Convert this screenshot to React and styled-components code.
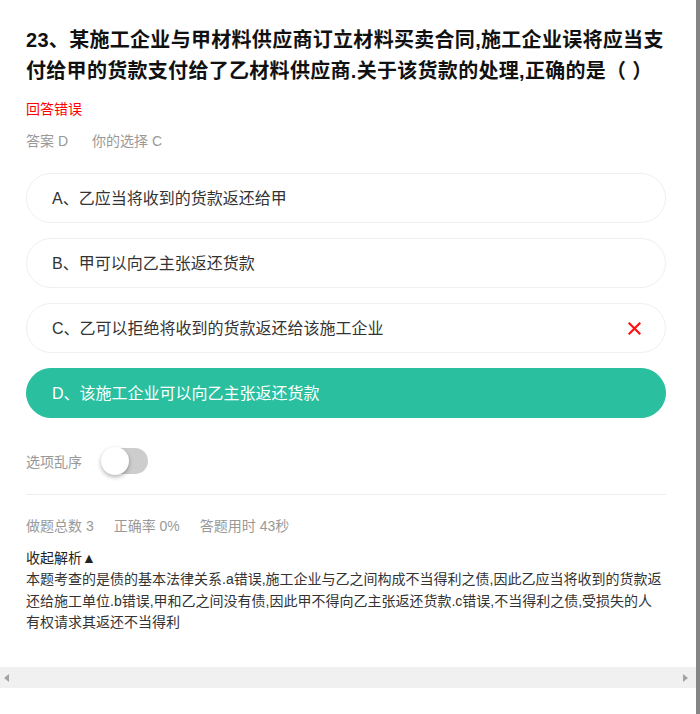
import React from 'react';
import styled, {createGlobalStyle} from "styled-components";

const GlobalStyle = createGlobalStyle`
    html, body {
        margin: 0;
        padding: 0;
        background: #fff;
    }
    body {
        font-family: "Liberation Sans", "Noto Sans CJK SC", sans-serif;
        color: #333;
    }
`;

const options = [
    {key: 'A', text: '乙应当将收到的货款返还给甲'},
    {key: 'B', text: '甲可以向乙主张返还货款'},
    {key: 'C', text: '乙可以拒绝将收到的货款返还给该施工企业', wrong: true},
    {key: 'D', text: '该施工企业可以向乙主张返还货款', correct: true},
];

const CrossIcon = () => (
    <svg width="13" height="13" viewBox="0 0 13 13">
        <path d="M1.5 1.5 L11.5 11.5 M11.5 1.5 L1.5 11.5" stroke="#ff1010" strokeWidth="2.2" strokeLinecap="square" />
    </svg>
);

const App = () => {

    return (
        <Page>
            <GlobalStyle />
            <Main>
                <Content>
                    <Title>23、某施工企业与甲材料供应商订立材料买卖合同,施工企业误将应当支付给甲的货款支付给了乙材料供应商.关于该货款的处理,正确的是（ ）</Title>
                    <Verdict>回答错误</Verdict>
                    <AnswerRow>
                        <span>答案 D</span>
                        <span>你的选择 C</span>
                    </AnswerRow>
                    <OptionList>
                        {options.map(o => (
                            <Option key={o.key} $correct={o.correct}>
                                <OptionText>{o.key}、{o.text}</OptionText>
                                {o.wrong && <CrossIcon />}
                            </Option>
                        ))}
                    </OptionList>
                    <ShuffleRow>
                        <span>选项乱序</span>
                        <Switch>
                            <Knob />
                        </Switch>
                    </ShuffleRow>
                    <Divider />
                    <Stats>
                        <span>做题总数 3</span>
                        <span>正确率 0%</span>
                        <span>答题用时 43秒</span>
                    </Stats>
                    <Collapse>收起解析▲</Collapse>
                    <Analysis>
                        本题考查的是债的基本法律关系.a错误,施工企业与乙之间构成不当得利之债,因此乙应当将收到的货款返还给施工单位.b错误,甲和乙之间没有债,因此甲不得向乙主张返还货款.c错误,不当得利之债,受损失的人有权请求其返还不当得利
                    </Analysis>
                </Content>
                <ScrollBar>
                    <Arrow $dir="left" />
                    <Arrow $dir="right" />
                </ScrollBar>
                <Filler />
            </Main>
            <EdgeStrip />
        </Page>
    );
};

export default App;

const Page = styled.div`
    display: flex;
    width: 700px;
    height: 714px;
    overflow: hidden;
`;

const Main = styled.div`
    width: 696px;
    display: flex;
    flex-direction: column;
    background: #fff;
`;

const Content = styled.div`
    height: 667px;
    overflow: hidden;
    box-sizing: border-box;
    padding: 25px 30px 0 26px;
    display: flex;
    flex-direction: column;
`;

const Title = styled.h1`
    margin: 0;
    width: 650px;
    font-size: 20px;
    line-height: 31px;
    font-weight: 700;
    letter-spacing: 0.3px;
    color: #111;
`;

const Verdict = styled.div`
    margin-top: 12px;
    font-size: 14px;
    line-height: 20px;
    color: #f00;
`;

const AnswerRow = styled.div`
    margin-top: 12px;
    display: flex;
    gap: 24px;
    font-size: 14px;
    line-height: 20px;
    color: #999;
`;

const OptionList = styled.div`
    margin-top: 22px;
    display: flex;
    flex-direction: column;
    gap: 15px;
`;

const Option = styled.div`
    height: 50px;
    box-sizing: border-box;
    border-radius: 25px;
    border: 1px solid ${p => p.$correct ? '#29bf9f' : '#efefef'};
    background: ${p => p.$correct ? '#29bf9f' : '#fff'};
    color: ${p => p.$correct ? '#fff' : '#333'};
    display: flex;
    align-items: center;
    justify-content: space-between;
    padding: 0 24px 0 25px;
    font-size: 16px;
`;

const OptionText = styled.span`
    margin-bottom: 3px;
`;

const ShuffleRow = styled.div`
    margin-top: 29px;
    display: flex;
    align-items: center;
    gap: 19px;
    font-size: 14px;
    color: #999;
`;

const Switch = styled.div`
    position: relative;
    width: 46px;
    height: 26px;
    border-radius: 13px;
    background: #cdcdcd;
    margin: 1px 0 1px 1px;
`;

const Knob = styled.div`
    position: absolute;
    left: -1px;
    top: -1px;
    width: 28px;
    height: 28px;
    border-radius: 50%;
    background: #fff;
    box-shadow: 0 2px 4px rgba(0, 0, 0, 0.3);
`;

const Divider = styled.div`
    margin-top: 19px;
    height: 1px;
    background: #eee;
    width: 640px;
`;

const Stats = styled.div`
    margin-top: 21px;
    display: flex;
    gap: 20px;
    font-size: 14px;
    line-height: 20px;
    color: #999;
`;

const Collapse = styled.div`
    margin-top: 12px;
    font-size: 14px;
    line-height: 20px;
    color: #222;
`;

const Analysis = styled.p`
    margin: 1px 0 0;
    width: 638px;
    font-size: 14px;
    line-height: 21.5px;
    color: #333;
`;

const ScrollBar = styled.div`
    height: 21px;
    background: #f0f0f0;
    display: flex;
    align-items: center;
    justify-content: space-between;
    padding: 0 8px 0 4px;
`;

const Arrow = styled.div`
    width: 0;
    height: 0;
    border-top: 4px solid transparent;
    border-bottom: 4px solid transparent;
    ${p => p.$dir === 'left'
        ? 'border-right: 5px solid #a3a3a3;'
        : 'border-left: 5px solid #a3a3a3;'}
`;

const Filler = styled.div`
    flex: 1;
    background: #fff;
`;

const EdgeStrip = styled.div`
    width: 4px;
    background: #858585;
`;
